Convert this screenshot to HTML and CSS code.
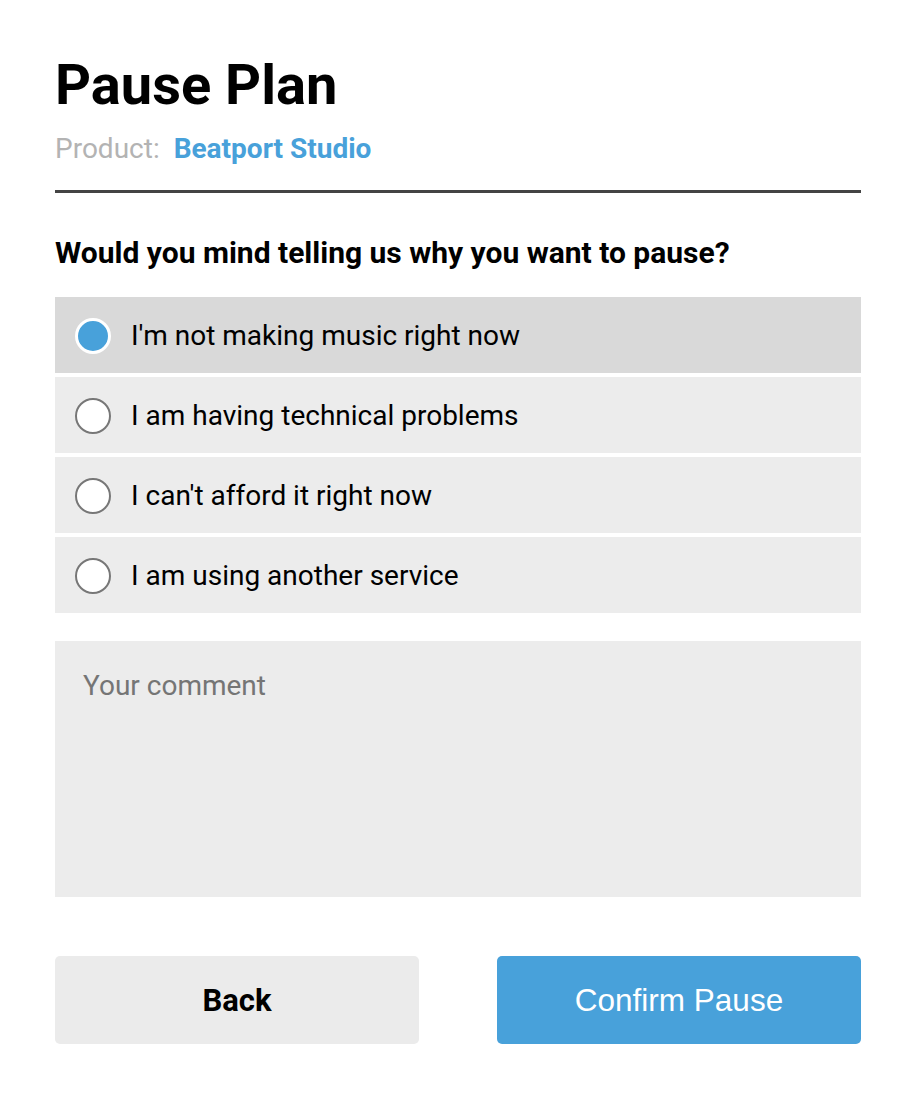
FILE: index.html
```html
<!DOCTYPE html>
<html lang="en">
<head>
  <meta charset="UTF-8">
  <title>Pause Plan</title>
  <link rel="stylesheet" href="styles.css">
</head>
<body>
  <div class="container">
    <h1>Pause Plan</h1>
    <div class="product">
      <span class="product-label">Product:</span>
      <span class="product-name">Beatport Studio</span>
    </div>

    <h2>Would you mind telling us why you want to pause?</h2>

    <div class="reasons">
      <label class="reason selected">
        <input type="radio" name="reason" checked>
        <span class="dot"></span>
        I'm not making music right now
      </label>
      <label class="reason">
        <input type="radio" name="reason">
        <span class="dot"></span>
        I am having technical problems
      </label>
      <label class="reason">
        <input type="radio" name="reason">
        <span class="dot"></span>
        I can't afford it right now
      </label>
      <label class="reason">
        <input type="radio" name="reason">
        <span class="dot"></span>
        I am using another service
      </label>
    </div>

    <textarea class="comment" placeholder="Your comment"></textarea>

    <div class="actions">
      <button class="btn btn-back">Back</button>
      <button class="btn btn-confirm">Confirm Pause</button>
    </div>
  </div>
</body>
</html>
```

FILE: styles.css
```css
/* base */
body {
  margin: 0;
  padding: 0;
  background: #fff;
  font-family: Roboto, "Liberation Sans", Arial, sans-serif;
  color: #000;
}

.container {
  padding: 52px 55px 40px;
}

h1 {
  margin: 0;
  font-size: 56px;
  font-weight: 700;
  line-height: 66px;
}

/* product line */
.product {
  margin-top: 14px;
  padding-bottom: 24px;
  border-bottom: 3px solid #444;
  font-size: 28px;
  line-height: 34px;
}
.product-label {
  color: #b3b3b3;
  margin-right: 7px;
}
.product-name {
  color: #48a1da;
  font-weight: 700;
}

h2 {
  margin: 42px 0 26px;
  font-size: 30px;
  font-weight: 700;
  line-height: 36px;
}

/* radio list */
.reasons {
  display: flex;
  flex-direction: column;
  gap: 4px;
}
.reason {
  display: flex;
  align-items: center;
  gap: 20px;
  height: 76px;
  padding: 0 20px;
  background: #ececec;
  font-size: 28px;
  line-height: 34px;
  padding-top: 1px;
  box-sizing: border-box;
  cursor: pointer;
}
.reason.selected {
  background: #d9d9d9;
}
.reason input {
  display: none;
}
.dot {
  box-sizing: border-box;
  width: 36px;
  height: 36px;
  border-radius: 50%;
  border: 2px solid #777;
  background: #fff;
  flex-shrink: 0;
}
.reason.selected .dot {
  border: 3px solid #fff;
  background: #48a1da;
}

/* comment */
.comment {
  display: block;
  box-sizing: border-box;
  width: 100%;
  height: 256px;
  margin-top: 28px;
  padding: 28px 28px;
  border: none;
  background: #ececec;
  font-family: Roboto, "Liberation Sans", Arial, sans-serif;
  font-size: 28px;
  resize: none;
}
.comment::placeholder {
  color: #757575;
}

/* buttons */
.actions {
  display: flex;
  justify-content: space-between;
  margin-top: 59px;
}
.btn {
  width: 364px;
  height: 88px;
  border: none;
  border-radius: 5px;
  cursor: pointer;
}
.btn-back {
  background: #ebebeb;
  color: #000;
  font-family: Roboto, Arial, sans-serif;
  font-size: 31px;
  font-weight: 700;
}
.btn-confirm {
  background: #48a1da;
  color: #fff;
  font-family: "Liberation Sans", Arial, sans-serif;
  font-size: 31.5px;
}
```
